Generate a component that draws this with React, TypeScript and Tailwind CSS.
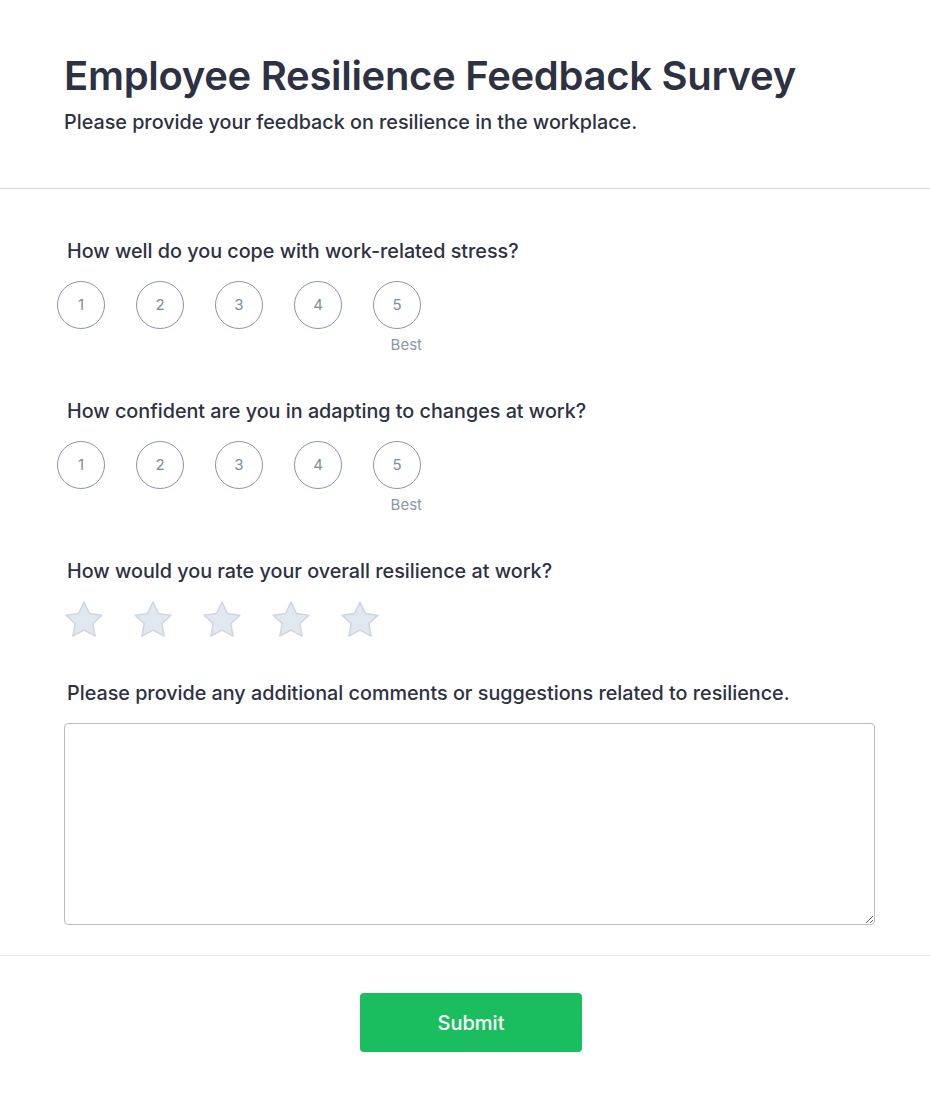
import React from "react";

const Star = () => (
  <svg width="40" height="40" viewBox="1.5 1.5 21 21">
    <path
      d="M12 2.6l2.85 6 6.55.85-4.8 4.55 1.25 6.5L12 17.3l-5.85 3.2 1.25-6.5-4.8-4.55 6.55-.85z"
      fill="#e2e8f0"
      stroke="#d0d6e1"
      strokeWidth="0.8"
      strokeLinejoin="round"
    />
  </svg>
);

const Scale = () => (
  <div className="flex gap-[31px] ml-[-10px] mt-[16px]">
    {[1, 2, 3, 4, 5].map((n) => (
      <div key={n} className="flex flex-col">
        <div className="w-12 h-12 rounded-full border border-[#8a94ad] flex items-center justify-center text-[15px] text-[#7d8ba3]">
          {n}
        </div>
        <div className="self-end mr-[-1px] h-[22px] text-[15px] text-[#8a96a8] leading-[22px] mt-[5px]">
          {n === 5 ? "Best" : ""}
        </div>
      </div>
    ))}
  </div>
);

export default function App() {
  return (
    <div className="min-h-[1102px] bg-white text-[#2d3142]" style={{ fontFamily: "Inter, 'Noto Sans', sans-serif" }}>
      <div className="px-16 pt-[52px] pb-[52px] border-b border-[#d8d9e6]">
        <h1 className="text-[40px] leading-[48px] font-semibold text-[#2d3142] tracking-[-0.3px]">
          Employee Resilience Feedback Survey
        </h1>
        <p className="text-[19.75px] leading-[28px] font-medium text-[#2d3142] mt-[8px]">
          Please provide your feedback on resilience in the workplace.
        </p>
      </div>
      <div className="px-16 pt-[48px] pb-[30px] border-b border-[#e6e9ef]">
        <div className="pl-[3px]">
          <div className="text-[19.75px] leading-[28px] font-medium">How well do you cope with work-related stress?</div>
          <Scale />
        </div>
        <div className="pl-[3px] mt-[41px]">
          <div className="text-[19.75px] leading-[28px] font-medium">How confident are you in adapting to changes at work?</div>
          <Scale />
        </div>
        <div className="pl-[3px] mt-[41px]">
          <div className="text-[19.75px] leading-[28px] font-medium">How would you rate your overall resilience at work?</div>
          <div className="flex gap-[29px] ml-[-3px] mt-[15px]">
            {[1, 2, 3, 4, 5].map((n) => (
              <Star key={n} />
            ))}
          </div>
        </div>
        <div className="mt-[39px]">
          <div className="pl-[3px] text-[19.75px] leading-[28px] font-medium">
            Please provide any additional comments or suggestions related to resilience.
          </div>
          <textarea className="mt-[16px] block w-[811px] h-[202px] border border-[#b8bccb] rounded-[4px] outline-none" />
        </div>
      </div>
      <div className="flex justify-center pl-3 pt-[37px] pb-[50px]">
        <button className="w-[222px] h-[59px] rounded-[4px] bg-[#1abe5e] text-white text-[20px] font-medium">
          Submit
        </button>
      </div>
    </div>
  );
}
